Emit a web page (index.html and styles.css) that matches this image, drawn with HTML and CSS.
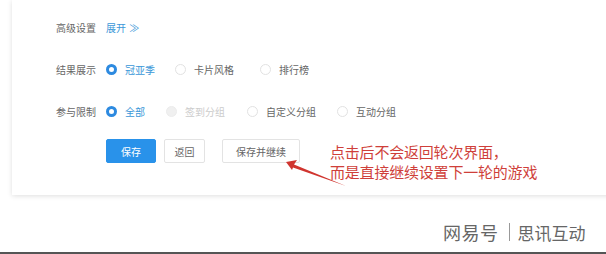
FILE: index.html
```html
<!DOCTYPE html>
<html lang="zh">
<head>
<meta charset="utf-8">
<link rel="stylesheet" href="styles.css">
</head>
<body>
<div class="page">
  <div class="card">
    <div class="row">
      <span class="label">高级设置</span>
      <span class="link">展开 <span class="chev">≫</span></span>
    </div>
    <div class="row">
      <span class="label">结果展示</span>
      <span class="opt"><i class="radio on"></i><span class="otext blue">冠亚季</span></span>
      <span class="opt o2"><i class="radio"></i><span class="otext">卡片风格</span></span>
      <span class="opt o3"><i class="radio"></i><span class="otext">排行榜</span></span>
    </div>
    <div class="row">
      <span class="label">参与限制</span>
      <span class="opt"><i class="radio on"></i><span class="otext blue">全部</span></span>
      <span class="opt p2"><i class="radio dis"></i><span class="otext grey">签到分组</span></span>
      <span class="opt p3"><i class="radio"></i><span class="otext">自定义分组</span></span>
      <span class="opt p4"><i class="radio"></i><span class="otext">互动分组</span></span>
    </div>
    <div class="btns">
      <button class="btn primary">保存</button>
      <button class="btn back">返回</button>
      <button class="btn cont">保存并继续</button>
    </div>
  </div>
  <div class="spacer"></div>
  <div class="bottomline"></div>

  <div class="note">点击后不会返回轮次界面，<br>而是直接继续设置下一轮的游戏</div>
  <svg class="arrow" width="606" height="254" viewBox="0 0 606 254">
    <path d="M286 162 L297 160 L294 164.5 L346 186 L293 167.5 L292 170 Z" fill="#d0352f"/>
  </svg>
  <div class="wm"><span class="wm1">网易号</span><span class="sep"></span><span class="wm2">思讯互动</span></div>
</div>
</body>
</html>
```
FILE: styles.css
```css
html, body { margin: 0; padding: 0; background: #fff; }
body { font-family: "Noto Sans CJK SC", "Noto Sans", sans-serif; }
.page { position: relative; width: 606px; height: 254px; overflow: hidden; display: flex; flex-direction: column; }
.card {
  margin-left: 12px;
  width: 620px;
  background: #fff;
  box-shadow: 0 1px 5px rgba(0,0,0,0.13);
  padding: 6px 0 32px 44px;
  box-sizing: border-box;
}
.row { height: 42px; display: flex; align-items: center; font-size: 10px; color: #666; }
.label { width: 40px; margin-right: 10px; white-space: nowrap; }
.link { color: #3b97d8; }
.chev { margin-left: 1px; font-size: 10px; }
.opt { display: flex; align-items: center; }
.radio { width: 11px; height: 11px; box-sizing: border-box; border-radius: 50%; border: 1px solid #e2e2e2; background: #fff; display: inline-block; }
.radio.on { border: 3px solid #2d8ae0; background: #fff; }
.radio.dis { background: #f0f0f0; border-color: #ececec; }
.otext { margin-left: 8px; }
.blue { color: #3b97d8; }
.grey { color: #ccc; }
.o2 { margin-left: 20px; }
.o3 { margin-left: 26px; }
.p2 { margin-left: 21px; }
.p3 { margin-left: 22px; }
.p4 { margin-left: 21px; }
.btns { margin-top: 7px; display: flex; padding-left: 50px; }
.btn { height: 24px; font-family: inherit; font-size: 10px; border-radius: 2px; box-sizing: border-box; padding: 0; }
.primary { width: 50px; background: #2992ea; border: 1px solid #2992ea; color: #fff; }
.back { width: 41px; margin-left: 8px; background: #fff; border: 1px solid #e3e3e3; color: #666; }
.cont { width: 78px; margin-left: 17px; background: #fff; border: 1px solid #e3e3e3; color: #666; }
.spacer { flex: 1; }
.bottomline { height: 2px; background: #555; }
.note { position: absolute; left: 330px; top: 142px; font-size: 15px; line-height: 20px; color: #cf3f3a; letter-spacing: -0.2px; }
.arrow { position: absolute; left: 0; top: 0; }
.wm { position: absolute; left: 443px; top: 220px; display: flex; align-items: center; color: #666; height: 24px; }
.wm1 { font-size: 18px; letter-spacing: 0.5px; }
.sep { width: 1px; height: 18px; background: #999; margin: 0 8px 0 10px; }
.wm2 { font-size: 17px; }
```
